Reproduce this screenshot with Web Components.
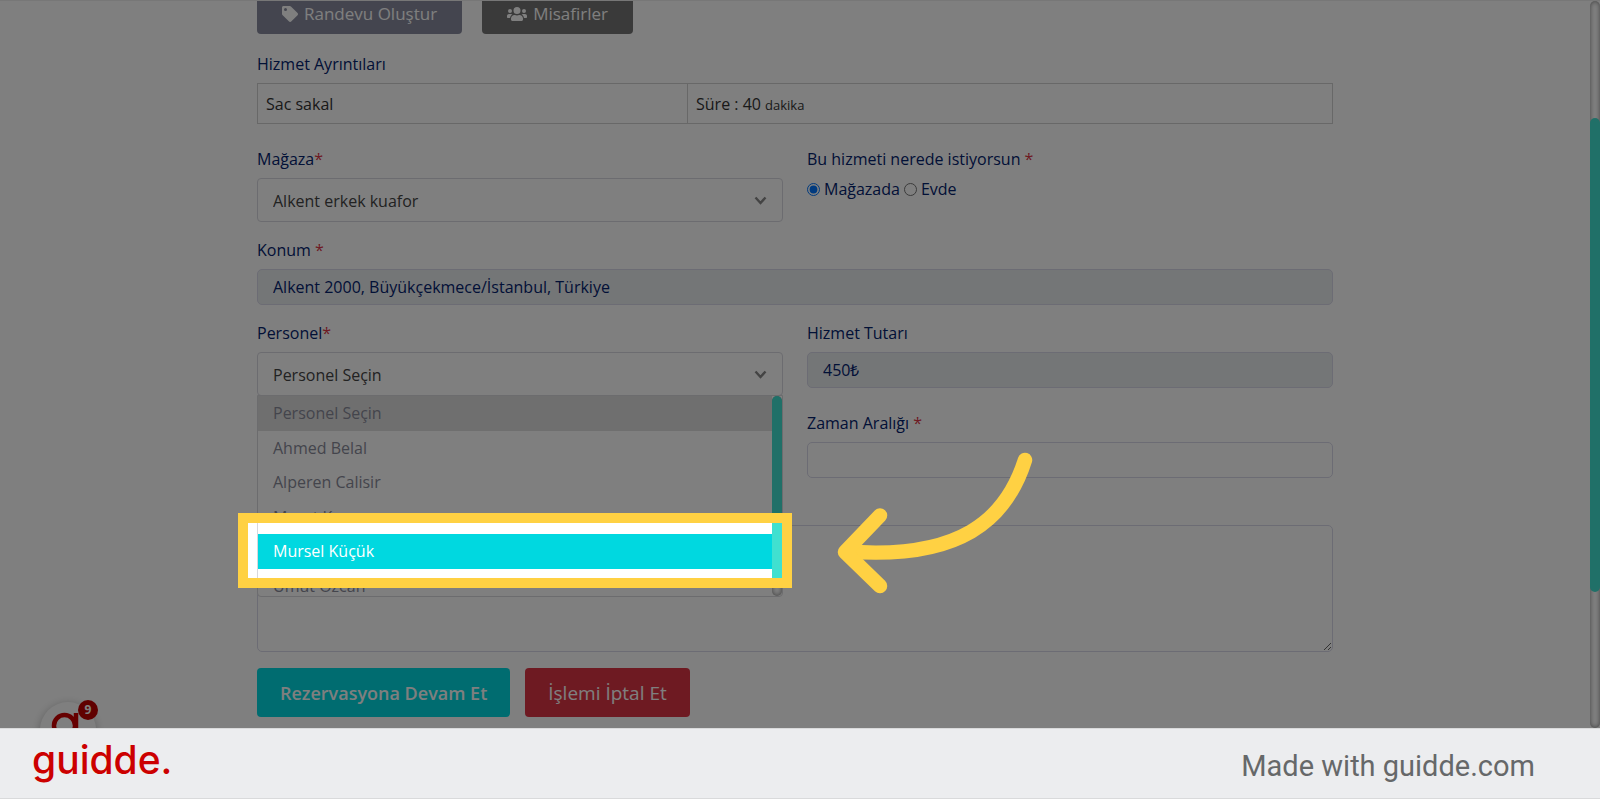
<!DOCTYPE html>
<html lang="tr">
<head>
<meta charset="utf-8">
<title>Rezervasyon</title>
<style>
  html, body { margin: 0; height: 100%; }
  body { font: 16px/24px "Open Sans", sans-serif; color: #04236e; background: #fff; }
</style>
</head>
<body>
<booking-page></booking-page>
<script>
const define = (name, html, setup) => {
  const template = document.createElement('template');
  template.innerHTML = html;
  customElements.define(name, class extends HTMLElement {
    constructor() {
      super();
      this.attachShadow({ mode: 'open' }).append(template.content.cloneNode(true));
    }
    connectedCallback() { if (setup) setup(this, this.shadowRoot); }
  });
};

/* Button: kind selects the colour, size "small" is used for the tab-like buttons */
define('action-button', `
  <style>
    :host { display: block; --bg: #00d8e0; }
    :host([kind=danger]) { --bg: #dc3545; }
    :host([kind=slate]) { --bg: #888b9e; }
    :host([kind=dark]) { --bg: #747474; }
    button { display: flex; align-items: center; gap: 6px; height: 49px; padding: 0 23px; border: 0; border-radius: 4px;
      background: var(--bg); color: #fff; font: 600 18px/24px "Open Sans", sans-serif; white-space: nowrap; }
    :host([kind=danger]) button { font-size: 19px; font-weight: 500; }
    :host([size=small]) button { font-size: 17px; font-weight: 400; padding: 8px 25px 0; }
  </style>
  <button type="button"><slot name="icon"></slot><slot></slot></button>`);

/* Label with an optional required mark, tied to a control in the same root */
define('text-field', `
  <style>
    :host { display: block; }
    label { display: block; font-weight: 500; margin-bottom: 7px; }
    i { color: #dc3545; font-style: normal; }
    input { display: block; box-sizing: border-box; width: 100%; height: 36px; padding: 0 15px; border: 1px solid #d8d8e8;
      border-radius: 5px; background: #fff; color: inherit; font: 500 16px/24px "Open Sans", sans-serif; }
    input:read-only { background: #e9ecef; }
  </style>
  <label for="c"><span></span><i></i></label><input id="c" type="text">`,
  (host, root) => {
    root.querySelector('span').textContent = host.getAttribute('label');
    root.querySelector('i').textContent = host.hasAttribute('required') ? ' *' : '';
    const input = root.querySelector('input');
    input.value = host.getAttribute('value') || '';
    input.readOnly = host.hasAttribute('readonly');
  });

define('select-field', `
  <style>
    :host { display: block; }
    label { display: block; font-weight: 500; margin-bottom: 7px; }
    i { color: #dc3545; font-style: normal; }
    .box { position: relative; }
    select { display: block; appearance: none; box-sizing: border-box; width: 100%; height: 44px; padding: 1px 15px 0; border: 1px solid #d8d8e0;
      border-radius: 4px; background: #fff; color: #444; font: 400 16px/24px "Open Sans", sans-serif; }
    .chevron { position: absolute; right: 16px; top: 18px; width: 13px; height: 9px; pointer-events: none; }
  </style>
  <label for="c"><span></span><i>*</i></label>
  <div class="box">
    <select id="c"><option></option></select>
    <svg class="chevron" viewBox="0 0 13 9" fill="none" stroke="#888" stroke-width="2.4"><path d="M1.5 1.5 6.5 7 11.5 1.5"/></svg>
    <slot></slot>
  </div>`,
  (host, root) => {
    root.querySelector('span').textContent = host.getAttribute('label');
    root.querySelector('option').textContent = host.getAttribute('value');
  });

define('option-list', `
  <style>
    :host { position: absolute; left: 0; right: 0; top: calc(100% - 1px); z-index: 2; color: #888a99; }
    .frame { display: flex; box-sizing: border-box; height: 202px; overflow: hidden; background: #fff; border: 1px solid #d8d8dc; border-radius: 0 0 4px 4px; }
    ul { flex: 1; display: grid; grid-template-rows: repeat(6, 1fr); height: 207px; margin: 0; padding: 0; list-style: none; }
    li { display: flex; align-items: center; padding: 0 15px; }
    li:first-child { background: #dfdfdf; }
    li[aria-selected=true] { background: #00d8e0; color: #fff; font-weight: 500; }
    .track { display: flex; flex-direction: column; width: 10px; border-radius: 10px; background: #fff; box-shadow: inset 0 0 5px #808080; }
    .thumb { flex: 0 0 96%; border-radius: 10px; background: #40e0d0; }
  </style>
  <div class="frame">
    <ul role="listbox" aria-label="Personel">
      <li role="option">Personel Seçin</li>
      <li role="option">Ahmed Belal</li>
      <li role="option">Alperen Calisir</li>
      <li role="option">Murat Kara</li>
      <li role="option" aria-selected="true">Mursel Küçük</li>
      <li role="option">Umut Ozcan</li>
    </ul>
    <div class="track"><div class="thumb"></div></div>
  </div>
  <slot></slot>`);

/* Frame that keeps one option bright and shades the rest of the page */
define('guide-spotlight', `
  <style>
    :host { position: absolute; z-index: 10; left: -19px; right: -9px; top: 118px; height: 75px; box-sizing: border-box;
      border: 10px solid #ffd143; box-shadow: 0 0 0 2000px rgba(0, 0, 0, .5); pointer-events: none; }
    svg { position: absolute; left: calc(100% + 55px); top: -72px; width: 196px; height: 143px; }
  </style>
  <svg viewBox="837 451 196 143" fill="none" stroke="#ffd143" stroke-width="14.5" stroke-linecap="round" stroke-linejoin="round">
    <path d="M1025 460C1006 520 960 560 847 551.500"/><path d="M880 515.500 845 552 880 586"/>
  </svg>`);

define('service-table', `
  <style>
    :host { display: block; }
    table { width: 100%; border-collapse: collapse; table-layout: fixed; color: #333; }
    td { height: 40px; padding: 0 8px; border: 1px solid #d0d0d0; box-sizing: border-box; }
    td:first-child { width: 40%; }
    small { font-size: 13px; line-height: 16px; }
  </style>
  <table aria-label="Hizmet Ayrıntıları"><tbody><tr><td>Sac sakal</td><td>Süre : 40 <small>dakika</small></td></tr></tbody></table>`);

define('place-choice', `
  <style>
    fieldset { border: 0; margin: 0; padding: 0; font-weight: 500; }
    legend { padding: 0; }
    i { color: #dc3545; font-style: normal; }
    .row { display: flex; align-items: center; gap: 4px; margin-top: 6px; }
    input { width: 13px; height: 13px; margin: 0; }
    label { display: flex; align-items: center; gap: 4px; }
  </style>
  <fieldset>
    <legend>Bu hizmeti nerede istiyorsun <i>*</i></legend>
    <div class="row">
      <label><input type="radio" name="place" checked>Mağazada</label>
      <label><input type="radio" name="place">Evde</label>
    </div>
  </fieldset>`);

define('page-scrollbar', `
  <style>
    :host { display: flex; flex-direction: column; width: 10px; border-radius: 10px; box-shadow: inset 0 0 5px #808080; }
    :host::before { content: ""; flex: 117; }
    :host::after { content: ""; flex: 136; }
    div { flex: 474; border-radius: 10px; background: #40e0d0; }
  </style>
  <div></div>`);

define('chat-bubble', `
  <style>
    :host { position: absolute; left: 40px; bottom: -30px; width: 56px; height: 56px; border-radius: 50%; background: #fff; box-shadow: 0 2px 10px #bbb; }
    svg { display: block; width: 56px; height: 56px; }
    b { position: absolute; right: -2px; top: -2px; width: 20px; height: 20px; border-radius: 50%; background: #c00000;
      color: #fff; font: 700 12px/20px "Open Sans", sans-serif; text-align: center; }
  </style>
  <svg viewBox="0 0 56 56" fill="none" stroke="#c00" stroke-width="4.500"><circle cx="24.500" cy="23.500" r="10.500"/><path d="M36 11V36"/></svg>
  <b>9</b>`);

define('brand-footer', `
  <style>
    :host { display: flex; align-items: center; justify-content: space-between; box-sizing: border-box; height: 71px; padding: 0 65px 0 32px;
      background: #ecedef; border: solid #d9dadb; border-width: 1px 0; color: #666869; font: 29px/36px Roboto, sans-serif; }
    strong { font: 500 39px/48px Inter, sans-serif; color: #c00; margin-bottom: 8px; }
    span { margin-top: 4px; }
  </style>
  <strong>guidde.</strong><span>Made with guidde.com</span>`);

define('booking-page', `
  <style>
    :host { display: flex; flex-direction: column; height: 100vh; overflow: hidden; }
    main { position: relative; flex: 1; min-height: 0; display: flex; overflow: hidden; border-top: 1px solid #777; }
    .scroll { flex: 1; min-width: 0; padding: 0 24px; }
    form { max-width: 1076px; margin: -16px auto 0; }
    .bar { display: flex; gap: 20px; }
    h2 { font: inherit; font-weight: 500; margin: 18px 0 7px; }
    .grid { display: grid; grid-template-columns: 1fr 1fr; gap: 16px 24px; margin-top: 23px; }
    .wide { grid-column: 1 / -1; }
    .stack { display: grid; gap: 23px; align-content: start; }
    textarea { display: block; box-sizing: border-box; width: 100%; height: 127px; margin: 47px 0 16px; border: 1px solid #d8d8e8; border-radius: 5px;
      background: #fff; font: inherit; }
    .actions { display: flex; gap: 15px; }
    svg { display: block; }
  </style>
  <main>
    <div class="scroll">
      <form>
        <div class="bar">
          <action-button kind="slate" size="small">
            <svg slot="icon" width="16" height="16" viewBox="0 0 512 512" fill="#fff"><path d="M0 252V48C0 21 21 0 48 0h204a48 48 0 0 1 34 14l212 212c19 19 19 49 0 68L294 498c-19 19-49 19-68 0L14 286A48 48 0 0 1 0 252zM112 64a48 48 0 1 0 0 96 48 48 0 0 0 0-96z"/></svg>Randevu Oluştur</action-button>
          <action-button kind="dark" size="small">
            <svg slot="icon" width="20" height="16" viewBox="0 0 640 512" fill="#fff"><path d="M96 224a64 64 0 1 0 0-128 64 64 0 0 0 0 128zm448 0a64 64 0 1 0 0-128 64 64 0 0 0 0 128zm32 32h-64c-18 0-34 7-45 19 40 22 69 62 75 109h66c18 0 32-14 32-32v-32c0-35-29-64-64-64zm-256 0a112 112 0 1 0 0-224 112 112 0 0 0 0 224zm77 32h-8c-42 20-96 20-138 0h-8c-64 0-115 52-115 115v29c0 26 21 48 48 48h288c26 0 48-22 48-48v-29c0-63-51-115-115-115zm-224-13c-11-12-27-19-45-19H64c-35 0-64 29-64 64v32c0 18 14 32 32 32h66c6-47 35-87 75-109z"/></svg>Misafirler</action-button>
        </div>
        <h2>Hizmet Ayrıntıları</h2>
        <service-table></service-table>
        <div class="grid">
          <select-field label="Mağaza" value="Alkent erkek kuafor"></select-field>
          <place-choice></place-choice>
          <text-field class="wide" label="Konum" required readonly value="Alkent 2000, Büyükçekmece/İstanbul, Türkiye"></text-field>
          <select-field label="Personel" value="Personel Seçin">
            <option-list><guide-spotlight></guide-spotlight></option-list>
          </select-field>
          <div class="stack">
            <text-field label="Hizmet Tutarı" readonly value="450₺"></text-field>
            <text-field label="Zaman Aralığı" required></text-field>
          </div>
        </div>
        <textarea aria-label="Not"></textarea>
        <div class="actions">
          <action-button>Rezervasyona Devam Et</action-button>
          <action-button kind="danger">İşlemi İptal Et</action-button>
        </div>
      </form>
    </div>
    <page-scrollbar></page-scrollbar>
    <chat-bubble></chat-bubble>
  </main>
  <brand-footer></brand-footer>`);
</script>
</body>
</html>
